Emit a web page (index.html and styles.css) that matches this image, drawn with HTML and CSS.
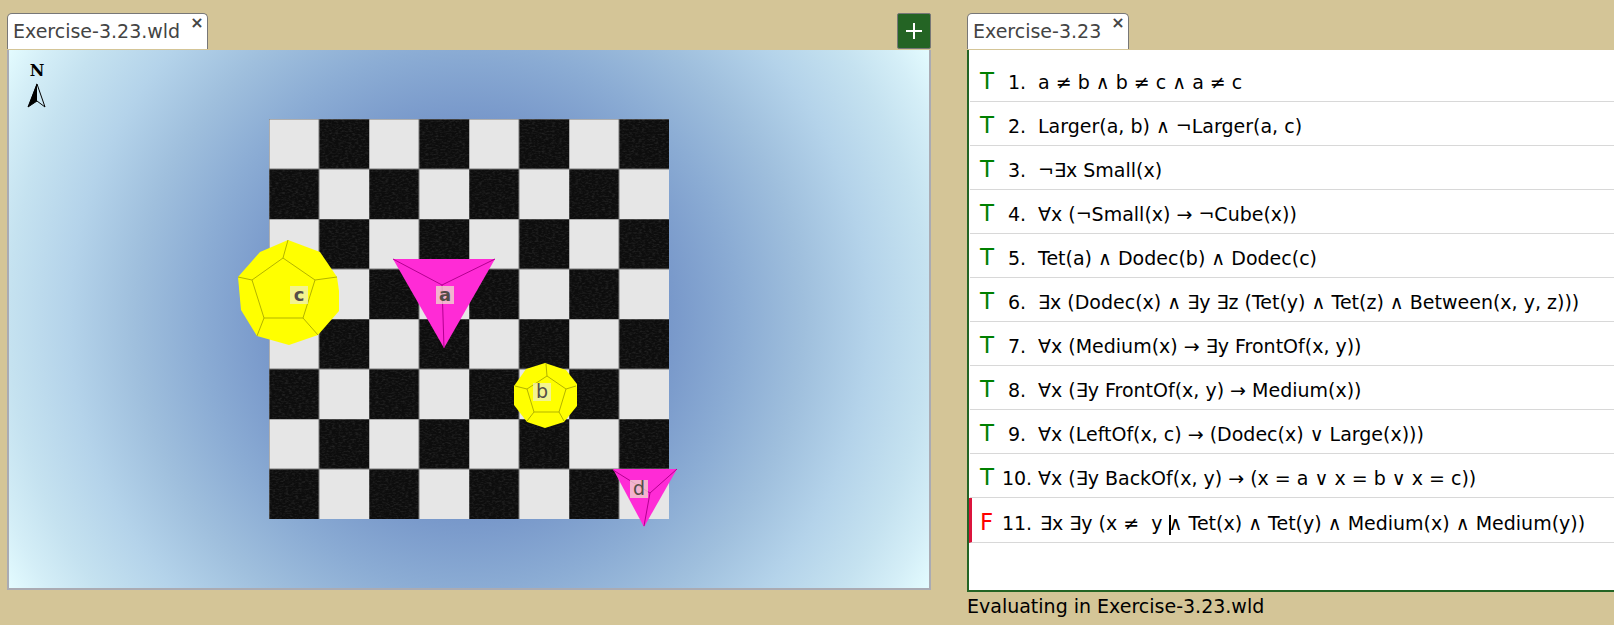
FILE: index.html
```html
<!DOCTYPE html>
<html lang="en">
<head>
<meta charset="utf-8">
<meta name="viewport" content="width=device-width, initial-scale=1">
<title>Exercise-3.23</title>
<link rel="stylesheet" href="styles.css">
</head>
<body>
<main class="workspace">
  <section class="pane" aria-label="World">
    <header class="tabs">
      <div class="tab">
        <span class="tab-name">Exercise-3.23.wld</span>
        <button class="tab-close" type="button" aria-label="Close Exercise-3.23.wld">×</button>
      </div>
      <button class="add" type="button" aria-label="New world">
        <svg class="add-icon" viewBox="0 0 16 16" aria-hidden="true"><path d="M8 0v16M0 8h16"/></svg>
      </button>
    </header>
    <div class="world">
      <svg class="scene" viewBox="0 0 920 536" preserveAspectRatio="xMidYMid meet" role="img" aria-label="Board seen from above">
        <defs>
          <pattern id="squares" x="260" y="68" width="100" height="100" patternUnits="userSpaceOnUse">
            <rect width="100" height="100" fill="#e6e6e6"/>
            <path d="M50 0h50v50h-50zM0 50h50v50H0z" fill="#0d0d0d"/>
            <path d="M0 0H100M0 50H100M0 0V100M50 0V100" stroke="#777" stroke-width="1"/>
          </pattern>
          <filter id="grain" x="0" y="0" width="100%" height="100%">
            <feTurbulence type="fractalNoise" baseFrequency="0.3 0.6" numOctaves="2" seed="4" result="n"/>
            <feColorMatrix in="n" type="matrix" values="0 0 0 0 0.5  0 0 0 0 0.5  0 0 0 0 0.5  0.3 0 0 0 -0.13"/>
            <feComposite in2="SourceGraphic" operator="in"/>
          </filter>
        </defs>

        <g class="compass">
          <text class="north" x="28" y="25">N</text>
          <path d="M28 33L19 56L28 50L36 56Z" fill="none" stroke="#000"/>
          <path d="M28 32L19 56L28 50Z" fill="#000"/>
        </g>

        <rect x="260" y="68" width="400" height="400" fill="url(#squares)"/>
        <path d="M310 68h50v50h-50zM410 68h50v50h-50zM510 68h50v50h-50zM610 68h50v50h-50zM260 118h50v50h-50zM360 118h50v50h-50zM460 118h50v50h-50zM560 118h50v50h-50zM310 168h50v50h-50zM410 168h50v50h-50zM510 168h50v50h-50zM610 168h50v50h-50zM260 218h50v50h-50zM360 218h50v50h-50zM460 218h50v50h-50zM560 218h50v50h-50zM310 268h50v50h-50zM410 268h50v50h-50zM510 268h50v50h-50zM610 268h50v50h-50zM260 318h50v50h-50zM360 318h50v50h-50zM460 318h50v50h-50zM560 318h50v50h-50zM310 368h50v50h-50zM410 368h50v50h-50zM510 368h50v50h-50zM610 368h50v50h-50zM260 418h50v50h-50zM360 418h50v50h-50zM460 418h50v50h-50zM560 418h50v50h-50z" filter="url(#grain)"/>

        <g class="dodec">
          <path class="face" d="M279 189L311 201L328 226L330 240L330 260L309 284L280 294L248 285L232 259L229 226L251 201Z"/>
          <path class="edge" d="M274 207L306 229L294 267L255 267L243 229ZM274 207L279 189M306 229L328 226M294 267L309 284M255 267L248 285M243 229L229 226"/>
          <rect class="plate" x="281" y="235" width="18" height="18"/>
          <text class="name strong" x="290" y="250">c</text>
        </g>

        <g class="tet">
          <path class="face" d="M384 208L486 208L435 297Z"/>
          <path class="edge" d="M384 208L433 234L486 208M433 234L435 297"/>
          <rect class="plate" x="427" y="235" width="18" height="18"/>
          <text class="name strong" x="436" y="250">a</text>
        </g>

        <g class="dodec">
          <path class="face" d="M536 312L557 319L568 333L568 355L555 371L536 377L518 371L505 354L505 335L517 318Z"/>
          <path class="edge" d="M538 325L557 338L550 361L525 361L518 338ZM538 325L537 313M557 338L567 335M550 361L555 370M525 361L518 370M518 338L506 335"/>
          <rect class="plate" x="524" y="332" width="18" height="18"/>
          <text class="name" x="533" y="347">b</text>
        </g>

        <g class="tet">
          <path class="face" d="M604 418L668 418L635 476Z"/>
          <path class="edge" d="M604 419L641 442L668 418M641 442L635 475"/>
          <rect class="plate" x="621" y="429" width="18" height="18"/>
          <text class="name" x="630" y="444">d</text>
        </g>
      </svg>
    </div>
  </section>

  <section class="pane" aria-label="Sentences">
    <header class="tabs">
      <div class="tab">
        <span class="tab-name">Exercise-3.23</span>
        <button class="tab-close" type="button" aria-label="Close Exercise-3.23">×</button>
      </div>
    </header>
    <div class="sentences">
      <div class="row"><span class="verdict">T</span><span class="number">1.</span><span class="formula">a ≠ b ∧ b ≠ c ∧ a ≠ c</span></div>
      <div class="row"><span class="verdict">T</span><span class="number">2.</span><span class="formula">Larger(a, b) ∧ ¬Larger(a, c)</span></div>
      <div class="row"><span class="verdict">T</span><span class="number">3.</span><span class="formula">¬∃x Small(x)</span></div>
      <div class="row"><span class="verdict">T</span><span class="number">4.</span><span class="formula">∀x (¬Small(x) → ¬Cube(x))</span></div>
      <div class="row"><span class="verdict">T</span><span class="number">5.</span><span class="formula">Tet(a) ∧ Dodec(b) ∧ Dodec(c)</span></div>
      <div class="row"><span class="verdict">T</span><span class="number">6.</span><span class="formula">∃x (Dodec(x) ∧ ∃y ∃z (Tet(y) ∧ Tet(z) ∧ Between(x, y, z)))</span></div>
      <div class="row"><span class="verdict">T</span><span class="number">7.</span><span class="formula">∀x (Medium(x) → ∃y FrontOf(x, y))</span></div>
      <div class="row"><span class="verdict">T</span><span class="number">8.</span><span class="formula">∀x (∃y FrontOf(x, y) → Medium(x))</span></div>
      <div class="row"><span class="verdict">T</span><span class="number">9.</span><span class="formula">∀x (LeftOf(x, c) → (Dodec(x) ∨ Large(x)))</span></div>
      <div class="row"><span class="verdict">T</span><span class="number">10.</span><span class="formula">∀x (∃y BackOf(x, y) → (x = a ∨ x = b ∨ x = c))</span></div>
      <div class="row current"><span class="verdict false">F</span><span class="number">11.</span><span class="formula editing">∃x ∃y (x ≠  y <span class="caret"></span>∧ Tet(x) ∧ Tet(y) ∧ Medium(x) ∧ Medium(y))</span></div>
    </div>
    <footer class="status">Evaluating in Exercise-3.23.wld</footer>
  </section>
</main>
</body>
</html>
```

FILE: styles.css
```css
* { box-sizing: border-box; }

body {
  margin: 0;
  background: #d4c597;
  color: #000;
  font-family: "DejaVu Sans", sans-serif;
  font-size: 19px;
  line-height: 24px;
}

button {
  font: inherit;
  border: 0;
  padding: 0;
  background: none;
  cursor: pointer;
}

.workspace {
  display: grid;
  grid-template-columns: minmax(0, 924fr) minmax(0, 647fr);
  gap: 36px;
  min-height: 100vh;
  padding: 13px 0 0 7px;
}

.pane {
  display: flex;
  flex-direction: column;
}

.tabs {
  display: flex;
  justify-content: space-between;
  align-items: flex-start;
  padding-bottom: 1px;
}

.tab {
  display: flex;
  align-items: flex-start;
  height: 36px;
  padding: 0 3px 0 5px;
  gap: 10px;
  background: #fff;
  border: 1px solid #777;
  border-bottom: 0;
  border-radius: 5px 5px 0 0;
}

.tab-name {
  padding-top: 5px;
  color: #444;
}

.tab-close {
  color: #444;
  font-size: 16px;
  font-weight: bold;
  line-height: 18px;
}

.add {
  display: grid;
  place-items: center;
  width: 34px;
  height: 36px;
  background: #246424;
  border: 1px solid #777;
  border-radius: 2px;
}

.add-icon {
  width: 16px;
  height: 16px;
  stroke: #fff;
  stroke-width: 2;
}

.world {
  display: flex;
  flex: 1;
  margin-bottom: 35px;
  border: 2px solid #aaabb3;
  border-top: 0;
  background: radial-gradient(circle, #7494c8 0, #7898ca 200px, #8bacd4 270px, #9fbfdd 335px, #b4d3ea 400px, #c5e2f0 460px, #d4eef7 500px, #e4fcff 535px);
}

.scene {
  width: 100%;
}

.north {
  font: bold 16px "DejaVu Serif", serif;
  text-anchor: middle;
}

.dodec { fill: #ffff00; stroke: #b3b300; }
.tet { fill: #ff2bd6; stroke: #b3008f; }
.face { stroke: none; }
.edge { fill: none; }

.plate {
  fill: #eeeecc;
  fill-opacity: 0.7;
  stroke: none;
}

.name {
  fill: #554d48;
  stroke: none;
  font: 19px "DejaVu Sans", sans-serif;
  text-anchor: middle;
}

.strong { font-weight: bold; font-size: 18px; }

.sentences {
  flex: 1;
  padding-top: 8px;
  background: #fff;
  border: solid #246424;
  border-width: 0 0 2px 2px;
}

.row {
  display: flex;
  align-items: baseline;
  height: 44px;
  margin-left: 1px;
  padding: 11px 0 0 10px;
  border-bottom: 1px solid #d8d8d8;
  white-space: pre;
}

.verdict {
  width: 20px;
  color: #008000;
  font-size: 23px;
}

.false { color: #ff0000; }

.number {
  width: 34px;
  text-align: center;
}

.formula { padding-left: 4px; }

.current {
  height: 45px;
  margin-left: 0;
  padding: 12px 0 0 8px;
  border-left: 3px solid #dc143c;
}

.editing { padding-left: 6px; }

.caret {
  display: inline-block;
  width: 2px;
  height: 20px;
  margin-right: -2px;
  background: #000;
  vertical-align: -5px;
}

.status {
  height: 33px;
  padding-top: 2px;
}
```
